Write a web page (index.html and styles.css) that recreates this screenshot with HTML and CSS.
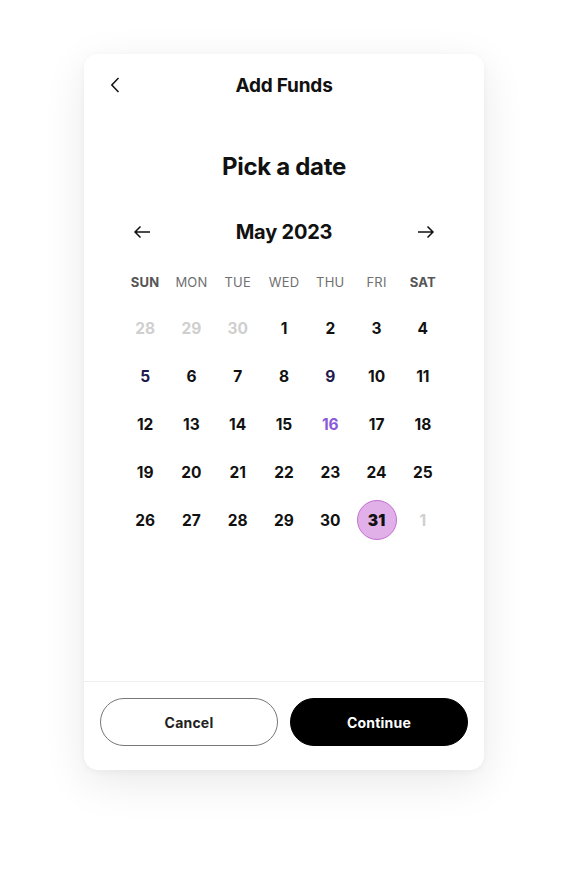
FILE: index.html
```html
<!DOCTYPE html>
<html>
	<head>
		<meta charset="utf-8" />
		<title>Add Funds</title>
		<link rel="stylesheet" href="styles.css">
	</head>
	<body>
		<div class="card">
			<div class="header">
				<span class="back">
					<svg width="10" height="16" viewBox="0 0 10 16"><path d="M8.5 1 L1.8 8 L8.5 15" fill="none" stroke="#111" stroke-width="1.5"/></svg>
				</span>
				<h1>Add Funds</h1>
			</div>

			<div class="content">
				<h2>Pick a date</h2>

				<div class="month">
					<span class="nav prev">
						<svg width="18" height="14" viewBox="0 0 18 14"><path d="M17 7 H2 M7.5 1.5 L2 7 L7.5 12.5" fill="none" stroke="#111" stroke-width="1.5"/></svg>
					</span>
					<span class="label">May 2023</span>
					<span class="nav next">
						<svg width="18" height="14" viewBox="0 0 18 14"><path d="M1 7 H16 M10.5 1.5 L16 7 L10.5 12.5" fill="none" stroke="#111" stroke-width="1.5"/></svg>
					</span>
				</div>

				<div class="days">
					<span class="wd strong">SUN</span>
					<span class="wd">MON</span>
					<span class="wd">TUE</span>
					<span class="wd">WED</span>
					<span class="wd">THU</span>
					<span class="wd">FRI</span>
					<span class="wd strong">SAT</span>

					<span class="d other">28</span><span class="d other">29</span><span class="d other">30</span><span class="d">1</span><span class="d">2</span><span class="d">3</span><span class="d">4</span>
					<span class="d navy">5</span><span class="d">6</span><span class="d">7</span><span class="d">8</span><span class="d navy">9</span><span class="d">10</span><span class="d">11</span>
					<span class="d">12</span><span class="d">13</span><span class="d">14</span><span class="d">15</span><span class="d today">16</span><span class="d">17</span><span class="d">18</span>
					<span class="d">19</span><span class="d">20</span><span class="d">21</span><span class="d">22</span><span class="d">23</span><span class="d">24</span><span class="d">25</span>
					<span class="d">26</span><span class="d">27</span><span class="d">28</span><span class="d">29</span><span class="d">30</span><span class="d"><b class="sel">31</b></span><span class="d other">1</span>
				</div>
			</div>

			<div class="footer">
				<button class="btn cancel">Cancel</button>
				<button class="btn go">Continue</button>
			</div>
		</div>
	</body>
</html>
```

FILE: styles.css
```css
html {
	background: #fff;
}

body {
	margin: 0;
	padding: 54px 0 113px;
	font-family: Inter, "Liberation Sans", sans-serif;
	color: #111;
}

.card {
	width: 400px;
	height: 716px;
	margin: 0 auto;
	background: #fff;
	border-radius: 14px;
	box-shadow: 0 12px 44px rgba(0, 0, 0, 0.09), 0 2px 6px rgba(0, 0, 0, 0.04);
	display: flex;
	flex-direction: column;
	overflow: hidden;
}

.header {
	height: 62px;
	display: flex;
	align-items: center;
	justify-content: center;
	position: relative;
}

.back {
	position: absolute;
	left: 26px;
	top: 23px;
	width: 10px;
	height: 16px;
}

.back svg {
	display: block;
}

h1 {
	margin: 0;
	font-size: 19px;
	font-weight: 700;
	letter-spacing: -0.2px;
}

.content {
	flex: 1;
	padding: 0 38px;
}

h2 {
	margin: 36px 0 0;
	font-size: 24px;
	line-height: 30px;
	font-weight: 700;
	text-align: center;
	letter-spacing: -0.3px;
}

.month {
	margin-top: 38px;
	height: 24px;
	display: grid;
	grid-template-columns: repeat(7, 1fr);
	align-items: center;
}

.month .nav {
	display: flex;
	justify-content: center;
}

.month .prev {
	padding-right: 7px;
}

.month .next {
	padding-left: 7px;
}

.month .nav svg {
	display: block;
}

.month .label {
	grid-column: 2 / 7;
	text-align: center;
	font-size: 20px;
	font-weight: 700;
	letter-spacing: -0.2px;
}

.days {
	margin-top: 28px;
	display: grid;
	grid-template-columns: repeat(7, 1fr);
	grid-auto-rows: 48px;
	grid-template-rows: 32px;
}

.wd {
	font-size: 13px;
	line-height: 20px;
	color: #707070;
	text-align: center;
	letter-spacing: 0.2px;
}

.wd.strong {
	font-weight: 700;
	color: #555;
}

.d {
	display: flex;
	align-items: center;
	justify-content: center;
	font-size: 15.5px;
	font-weight: 700;
}

.d.other {
	color: #cfcfcf;
}

.d.navy {
	color: #1f1a4d;
}

.d.today {
	color: #8a5ad8;
}

.sel {
	width: 38px;
	height: 38px;
	border-radius: 50%;
	background: #e2b0e8;
	border: 1px solid #c46ed2;
	display: flex;
	align-items: center;
	justify-content: center;
}

.footer {
	border-top: 1px solid #efefef;
	padding: 16px 16px 24px;
	display: flex;
	gap: 12px;
}

.btn {
	flex: 1;
	height: 48px;
	border-radius: 24px;
	font-family: Inter, "Liberation Sans", sans-serif;
	font-size: 14px;
	font-weight: 700;
	letter-spacing: 0.2px;
}

.cancel {
	background: #fff;
	border: 1px solid #777;
	color: #222;
}

.go {
	background: #000;
	border: 1px solid #000;
	color: #fff;
}
```
